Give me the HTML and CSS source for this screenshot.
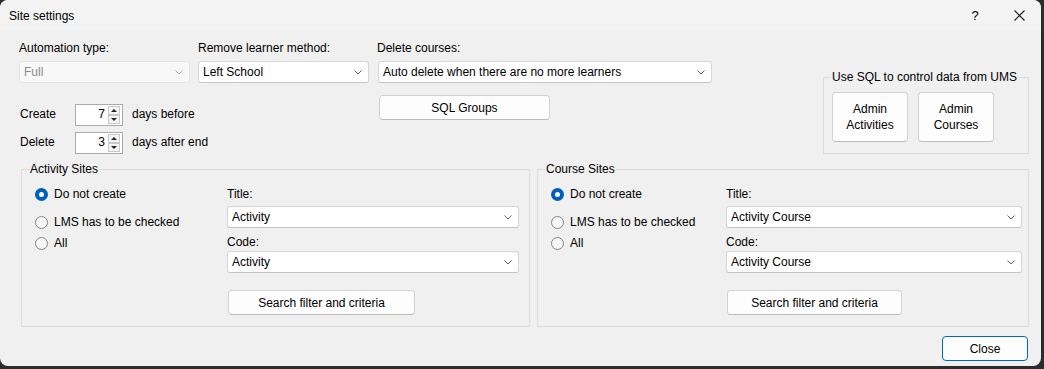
FILE: index.html
```html
<!DOCTYPE html>
<html>
  <head>
    <meta charset="UTF-8" />
    <title>Site settings</title>
    <link rel="stylesheet" href="styles.css">
  </head>
  <body>
    <!--The dialog window-->
    <div class="window">
      <!--Title bar with the help and close captions-->
      <div class="titlebar">
        <span class="title">Site settings</span>
        <span class="caption-btn help">?</span>
        <span class="caption-btn">
          <svg width="11" height="11" viewBox="0 0 11 11"><path d="M0.5 0.5 L10.5 10.5 M10.5 0.5 L0.5 10.5" stroke="#1a1a1a" stroke-width="1.1" fill="none"/></svg>
        </span>
      </div>

      <div class="content">
        <!--Top part: the three combo boxes, the day counters and the UMS group-->
        <div class="top">
          <div class="top-grid">
            <div class="field">
              <label>Automation type:</label>
              <div class="combo disabled">
                <span>Full</span>
                <svg class="chevron" width="8" height="5" viewBox="0 0 8 5"><path d="M0.5 0.5 L4 4 L7.5 0.5" stroke="#b0b0b0" fill="none"/></svg>
              </div>
            </div>
            <div class="field">
              <label>Remove learner method:</label>
              <div class="combo">
                <span>Left School</span>
                <svg class="chevron" width="8" height="5" viewBox="0 0 8 5"><path d="M0.5 0.5 L4 4 L7.5 0.5" stroke="#5f5f5f" fill="none"/></svg>
              </div>
            </div>
            <div class="field">
              <label>Delete courses:</label>
              <div class="combo wide">
                <span>Auto delete when there are no more learners</span>
                <svg class="chevron" width="8" height="5" viewBox="0 0 8 5"><path d="M0.5 0.5 L4 4 L7.5 0.5" stroke="#5f5f5f" fill="none"/></svg>
              </div>
            </div>

            <div class="days">
              <div class="days-row">
                <span class="days-label">Create</span>
                <div class="spin">
                  <span class="spin-value">7</span>
                  <div class="spin-arrows">
                    <span class="arrow"><i class="tri up"></i></span>
                    <span class="arrow"><i class="tri down"></i></span>
                  </div>
                </div>
                <span class="days-text">days before</span>
              </div>
              <div class="days-row">
                <span class="days-label">Delete</span>
                <div class="spin">
                  <span class="spin-value">3</span>
                  <div class="spin-arrows">
                    <span class="arrow"><i class="tri up"></i></span>
                    <span class="arrow"><i class="tri down"></i></span>
                  </div>
                </div>
                <span class="days-text">days after end</span>
              </div>
            </div>
            <button class="btn sql">SQL Groups</button>
          </div>

          <fieldset class="group ums">
            <legend>Use SQL to control data from UMS</legend>
            <div class="ums-buttons">
              <button class="btn tall">Admin<br>Activities</button>
              <button class="btn tall">Admin<br>Courses</button>
            </div>
          </fieldset>
        </div>

        <!--Activity and course site groups-->
        <div class="groups">
          <fieldset class="group sites activity">
            <legend>Activity Sites</legend>
            <div class="sites-body">
              <div class="radios">
                <div class="radio-row"><span class="radio checked"></span>Do not create</div>
                <div class="radio-row second"><span class="radio"></span>LMS has to be checked</div>
                <div class="radio-row third"><span class="radio"></span>All</div>
              </div>
              <div class="names">
                <label>Title:</label>
                <div class="combo">
                  <span>Activity</span>
                  <svg class="chevron" width="8" height="5" viewBox="0 0 8 5"><path d="M0.5 0.5 L4 4 L7.5 0.5" stroke="#5f5f5f" fill="none"/></svg>
                </div>
                <label class="code-label">Code:</label>
                <div class="combo code">
                  <span>Activity</span>
                  <svg class="chevron" width="8" height="5" viewBox="0 0 8 5"><path d="M0.5 0.5 L4 4 L7.5 0.5" stroke="#5f5f5f" fill="none"/></svg>
                </div>
                <button class="btn search">Search filter and criteria</button>
              </div>
            </div>
          </fieldset>

          <fieldset class="group sites course">
            <legend>Course Sites</legend>
            <div class="sites-body">
              <div class="radios">
                <div class="radio-row"><span class="radio checked"></span>Do not create</div>
                <div class="radio-row second"><span class="radio"></span>LMS has to be checked</div>
                <div class="radio-row third"><span class="radio"></span>All</div>
              </div>
              <div class="names">
                <label>Title:</label>
                <div class="combo">
                  <span>Activity Course</span>
                  <svg class="chevron" width="8" height="5" viewBox="0 0 8 5"><path d="M0.5 0.5 L4 4 L7.5 0.5" stroke="#5f5f5f" fill="none"/></svg>
                </div>
                <label class="code-label">Code:</label>
                <div class="combo code">
                  <span>Activity Course</span>
                  <svg class="chevron" width="8" height="5" viewBox="0 0 8 5"><path d="M0.5 0.5 L4 4 L7.5 0.5" stroke="#5f5f5f" fill="none"/></svg>
                </div>
                <button class="btn search">Search filter and criteria</button>
              </div>
            </div>
          </fieldset>
        </div>

        <!--Bottom row with the close button-->
        <div class="footer">
          <button class="btn primary">Close</button>
        </div>
      </div>
    </div>
  </body>
</html>
```

FILE: styles.css
```css
* {
  box-sizing: border-box;
}
body {
  margin: 0;
  background: #2c2c2c;
  font-family: "Liberation Sans", Arial, sans-serif;
  font-size: 12px;
  color: #000;
}
/* the dialog itself, with rounded windows 11 corners */
.window {
  width: 1041px;
  height: 366px;
  background: #f0f0f0;
  border-radius: 8px;
  overflow: hidden;
  display: flex;
  flex-direction: column;
}
.titlebar {
  height: 31px;
  flex-shrink: 0;
  background: #f3f3f3;
  display: flex;
  align-items: center;
  padding-left: 9px;
}
.title {
  flex: 1;
}
.caption-btn {
  width: 44px;
  height: 31px;
  display: flex;
  align-items: center;
  justify-content: center;
}
.help {
  font-size: 13px;
}
.content {
  flex: 1;
  padding: 9px 12px 0 19px;
  display: flex;
  flex-direction: column;
}
/* top part */
.top {
  display: flex;
  align-items: flex-start;
}
.top-grid {
  display: grid;
  grid-template-columns: 171px 171px 335px;
  column-gap: 8px;
  align-items: start;
}
label {
  display: block;
  line-height: 16px;
}
.field label {
  margin-bottom: 5px;
}
.combo {
  height: 22px;
  background: #fff;
  border: 1px solid #d6d6d6;
  border-bottom-color: #c4c4c4;
  border-radius: 3px;
  display: flex;
  align-items: center;
  padding-left: 4px;
}
.combo span {
  flex: 1;
}
.combo.wide {
  margin-left: 1px;
}
.combo.disabled {
  background: #f8f8f8;
  border-color: #e4e4e4;
  color: #8a8a8a;
}
.chevron {
  margin-right: 6px;
}
/* create / delete counters */
.days {
  grid-column: 1 / 3;
  margin-top: 21px;
  display: flex;
  flex-direction: column;
  gap: 6px;
}
.days-row {
  display: flex;
  align-items: center;
  height: 22px;
}
.days-label,
.days-text {
  margin-bottom: 3px;
}
.days-label {
  width: 56px;
  padding-left: 1px;
}
.spin {
  width: 48px;
  height: 22px;
  background: #fff;
  border: 1px solid #ababab;
  display: flex;
  align-items: center;
  padding-right: 2px;
  margin-right: 9px;
}
.spin-value {
  flex: 1;
  text-align: right;
  padding-right: 3px;
  margin-bottom: 2px;
}
.spin-arrows {
  width: 12px;
  display: flex;
  flex-direction: column;
}
.arrow {
  height: 9px;
  border: 1px solid #c9c9c9;
  background: #f4f4f4;
  display: flex;
  align-items: center;
  justify-content: center;
}
.tri {
  width: 0;
  height: 0;
  border-left: 3px solid transparent;
  border-right: 3px solid transparent;
}
.tri.up {
  border-bottom: 3px solid #222;
}
.tri.down {
  border-top: 3px solid #222;
}
/* buttons */
.btn {
  font-family: inherit;
  font-size: 12px;
  color: #000;
  background: #fdfdfd;
  border: 1px solid #d2d2d2;
  border-bottom-color: #bcbcbc;
  border-radius: 4px;
  padding: 0;
  height: 25px;
}
.sql {
  grid-column: 3;
  width: 171px;
  margin-top: 12px;
  margin-left: 2px;
}
.tall {
  width: 76px;
  height: 50px;
  line-height: 16px;
}
.primary {
  width: 86px;
  border: 1px solid #0067c0;
}
/* group boxes */
.group {
  margin: 0;
  padding: 0;
  border: 1px solid #dcdcdc;
  min-width: 0;
}
.group legend {
  margin-left: 7px;
  padding: 0 1px;
  line-height: 16px;
}
.ums {
  margin-left: auto;
  margin-top: 29px;
  width: 206px;
}
.ums-buttons {
  display: flex;
  gap: 10px;
  padding: 7px 0 11px 8px;
}
.groups {
  display: flex;
  gap: 7px;
  margin-top: 7px;
  margin-left: 2px;
}
.sites {
  height: 166px;
}
.activity {
  width: 509px;
}
.course {
  width: 492px;
}
.sites-body {
  display: grid;
  grid-template-columns: 192px 1fr;
  padding: 9px 10px 0 13px;
}
.course .sites-body {
  grid-template-columns: 175px 1fr;
  padding-right: 6px;
}
.radio-row {
  display: flex;
  align-items: center;
  height: 16px;
}
.radio-row.second {
  margin-top: 12px;
}
.radio-row.third {
  margin-top: 5px;
}
.radio {
  width: 13px;
  height: 13px;
  border-radius: 50%;
  border: 1px solid #858585;
  background: #f7f7f7;
  margin-right: 6px;
}
.radio.checked {
  border: 4px solid #005fb8;
  background: #fff;
}
.names .combo {
  margin-top: 4px;
}
.names .code-label {
  margin-top: 6px;
}
.names .combo.code {
  margin-top: 1px;
}
.search {
  margin-top: 17px;
  margin-left: 1px;
  width: 187px;
}
.course .search {
  width: 175px;
}
.footer {
  display: flex;
  justify-content: flex-end;
  margin-top: 9px;
  padding-right: 1px;
}
```
